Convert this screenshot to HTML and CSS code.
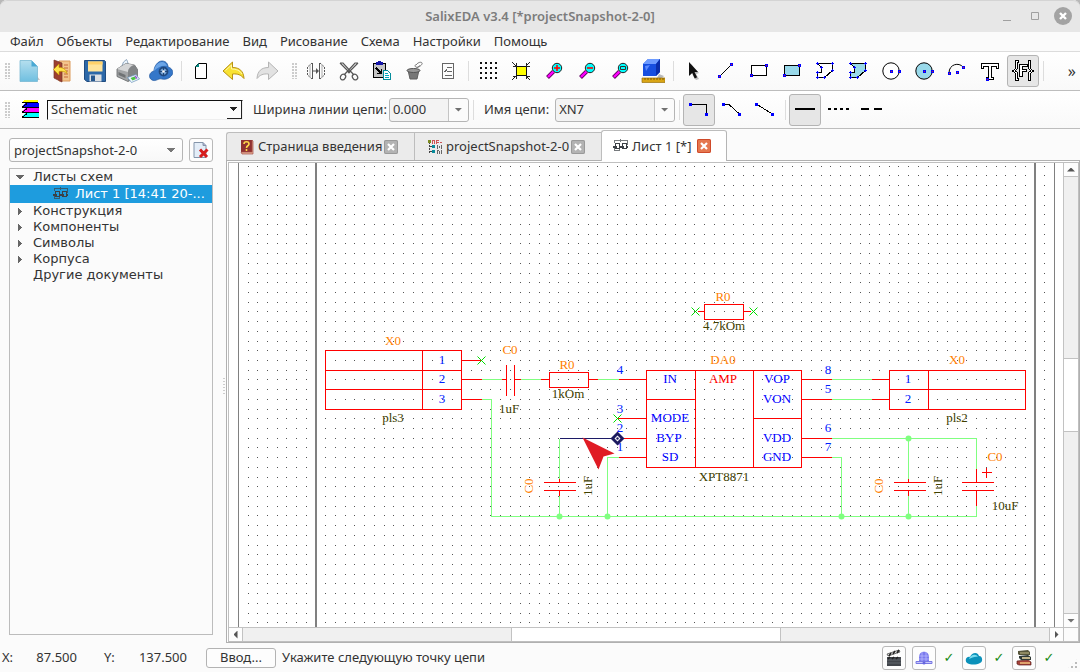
FILE: index.html
```html
<!DOCTYPE html>
<html lang="ru">
<head>
<meta charset="utf-8">
<title>SalixEDA v3.4</title>
<link rel="stylesheet" href="styles.css">
</head>
<body>
<div class="window">
  <header class="titlebar">
    <span></span>
    <h1 class="title">SalixEDA v3.4 [*projectSnapshot-2-0]</h1>
    <div class="window-buttons">
      <button class="win-btn" aria-label="Свернуть"><svg width="10" height="10"><path d="M1 9.500h8" stroke="#a0a0a0"/></svg></button>
      <button class="win-btn" aria-label="Развернуть"><svg width="10" height="10"><path d="M1.500 1.500h7v7h-7z" fill="none" stroke="#a0a0a0"/></svg></button>
      <button class="win-btn" aria-label="Закрыть"><svg width="18" height="18"><circle cx="9" cy="9" r="9" fill="#a3a3a3"/><path d="M6 6l6 6M12 6l-6 6" stroke="#fff" stroke-width="2.400"/></svg></button>
    </div>
  </header>

  <nav class="menubar">
    <button>Файл</button><button>Объекты</button><button>Редактирование</button><button>Вид</button><button>Рисование</button><button>Схема</button><button>Настройки</button><button>Помощь</button>
  </nav>

  <div class="toolbar">
    <span class="handle"></span>
    <div class="group">
      <button class="tool" aria-label="Новый"><svg viewBox="0 0 24 24"><defs><linearGradient id="doc" x1="0" y1="0" x2="0" y2="1"><stop offset="0" stop-color="#b5dfee"/><stop offset="1" stop-color="#6fbfe0"/></linearGradient></defs><path d="M5 21h18l-3-4z" fill="#c4c4c4"/><path d="M3 1.500h11.500l6 6V22.500H3z" fill="url(#doc)" stroke="#79b9d3" stroke-width=".8"/><path d="M14.500 1.500v6h6z" fill="#4aa9d4"/></svg></button>
      <button class="tool" aria-label="Открыть"><svg viewBox="0 0 24 24"><path d="M9 2h11v20H9z" fill="#f3c48b" stroke="#dc9a5b"/><path d="M14 6h4M14 9h4M14 12h4M14 15h4M14 18h4" stroke="#c4693c"/><path d="M4 1l8 3v19l-8-4z" fill="#9d3f2f" stroke="#76332b" stroke-width=".7"/><path d="M3.500 10.500L9 5v3.500c4 0 7 1.500 8 6-2-2-4-2.500-8-2V16z" fill="#ffe24b" stroke="#c99700" stroke-width=".7"/></svg></button>
      <button class="tool" aria-label="Сохранить"><svg viewBox="0 0 24 24"><path d="M1.500 1.500h20l1 1v20H4l-2.500-2z" fill="#2c68a8" stroke="#204c80"/><path d="M5 2.500h14.500v10H5z" fill="#ffe49c"/><path d="M5 2.500h14.500v3H5z" fill="#ffd16a"/><path d="M6.500 15.500h12v7h-12z" fill="#dde0e3"/><path d="M8 16.500h4v5.500H8z" fill="#26588f"/></svg></button>
      <button class="tool" aria-label="Печать"><svg viewBox="0 0 24 24"><path d="M5 9L7.500 3l3-2.500 1 2L13 9z" fill="#e9f3fc" stroke="#7893ad" stroke-width=".8"/><path d="M1 10l9-5.500L18.500 6l3 4.500v7L12 22.500 1 17.500z" fill="#a2a4a6" stroke="#616365" stroke-width=".8"/><path d="M1 10l9-5.500L18.500 6c-4 .5-6 3-6.500 7z" fill="#d5d6d7"/><path d="M12 13c.5-4 3.500-6 6.500-7l3 4.500v7L12 22.500z" fill="#818486"/><path d="M2.500 13l7 3v3l-7-3z" fill="#6f7274"/><path d="M11.500 18.500l8.500-3 3.500 4.500-8 3.500z" fill="#eef5ff" stroke="#6692b7" stroke-width=".7"/><path d="M14.500 19l4-1.500 1.500 2.500-3.500 1.500z" fill="#4cc445"/><path d="M19 17l2 2.500" stroke="#9355cf" stroke-width="1.500"/></svg></button>
      <button class="tool" aria-label="Облако"><svg viewBox="0 0 24 24"><path d="M3 21c-4-2-3-8 2-9 0-5 4-10 8-10s6 3 6 6c4 1 6 5 4 8s-6 5-10 4-6 3-10 1z" fill="#3577c9" stroke="#1c549d" stroke-width=".7"/><path d="M5 12c0-4 4-9 8-9 2 0 4 1 5 4-5-1-9 1-13 5z" fill="#6ba5e7"/><circle cx="14.500" cy="12.500" r="4" fill="#75a2d3" stroke="#224b82" stroke-width="1.800"/><path d="M14.500 8v9M10 12.500h9" stroke="#1e467b"/><circle cx="14.500" cy="12.500" r="1.300" fill="#fff"/></svg></button>
    </div>
    <span class="sep"></span>
    <div class="group">
      <button class="tool" aria-label="Лист"><svg viewBox="0 0 24 24"><path d="M9.500 4.500h8v15h-11v-12z" fill="#fff" stroke="#000"/><path d="M6 8l4-4v4z" fill="#078a83"/></svg></button>
      <button class="tool" aria-label="Отменить"><svg viewBox="0 0 24 24"><path d="M1 12L10.500 3v5.500c7 0 11 3.500 11.500 11-3-3.500-6-5-11.500-4.500v5.500z" fill="#f8e232" stroke="#b89113"/><path d="M3.500 11.500l6-5.500v4c5 0 8.500 1.500 10.500 5" fill="none" stroke="#fff6a8"/></svg></button>
      <button class="tool" aria-label="Повторить"><svg viewBox="0 0 24 24"><path d="M23 12L13.500 3v5.500c-7 0-11 3.500-11.500 11 3-3.500 6-5 11.500-4.500v5.500z" fill="#e2e2e2" stroke="#b5b5b5"/></svg></button>
    </div>
    <span class="handle wide"></span>
    <div class="group">
      <button class="tool" aria-label="Зазор"><svg viewBox="0 0 24 24" fill="none" stroke="#555"><path d="M8.500 4v16M15.500 4v16" /><path d="M8 4L3.500 8v8L8 20M16 4l4.500 4v8L16 20" stroke-dasharray="2 1"/><path d="M6 6v12M18 6v12" stroke="#aaa"/><path d="M9 12h4"/><path d="M12 9l3 3-3 3z" fill="#555" stroke="none"/></svg></button>
      <button class="tool" aria-label="Вырезать"><svg viewBox="0 0 24 24" fill="none" stroke="#555" stroke-width="1.200"><path d="M3 4l3 0 11 12M21 4l-3 0L7 16M3 4l10 10M21 4L11 14"/><ellipse cx="6" cy="18" rx="2.500" ry="3" transform="rotate(35 6 18)"/><ellipse cx="18" cy="18" rx="2.500" ry="3" transform="rotate(-35 18 18)"/></svg></button>
      <button class="tool" aria-label="Вставить"><svg class="crisp" viewBox="0 0 24 24"><path d="M3.500 4.500h12v14h-12z" fill="#c5c5c5" stroke="#000"/><path d="M6 3h2V2h3v1h2v3H6z" fill="#1515a8"/><path d="M6 9l5 5M11.500 10v4.500H7" stroke="#000" stroke-width="1.500" fill="none"/><path d="M13.500 11.500h4l3 3v6h-7z" fill="#fff" stroke="#058d9c"/><path d="M15 14.500h3M15 16.500h4M15 18.500h4" stroke="#00a9c0"/></svg></button>
      <button class="tool" aria-label="Очистить"><svg viewBox="0 0 24 24"><path d="M5 11h11l-2 9H7z" fill="#777" stroke="#5f5f5f"/><ellipse cx="10.500" cy="11.500" rx="6.500" ry="2" fill="#999" stroke="#555"/><path d="M13 9.500l4-3M13 6c3-4 7-3 6-1s-4 4-6 3-1-2 0-2z" fill="none" stroke="#777"/></svg></button>
      <button class="tool" aria-label="Свойства"><svg class="crisp" viewBox="0 0 24 24" fill="none" stroke="#666"><path d="M6.500 4.500h11v15h-11z"/><path d="M11 8.500h5M11 12.500h5M9 16.500h7M8 12l1 1 2-3"/></svg></button>
    </div>
    <span class="sep"></span>
    <div class="group">
      <button class="tool" aria-label="Сетка"><svg class="crisp" viewBox="0 0 24 24" stroke="#111" stroke-width="2" stroke-dasharray="2 3"><path d="M4 4h17M4 9h17M4 14h17M4 19h17"/></svg></button>
      <button class="tool" aria-label="Показать всё"><svg class="crisp" viewBox="0 0 24 24" stroke="#222"><path d="M7.500 7.500h10v9h-10z" fill="#ff0" stroke="#111"/><path d="M3 3l4 4M21 3l-4 4M3 21l4-4M21 21l-4-4M7.500 4v3H4M17.500 4v3H21M7.500 20v-3H4M17.500 20v-3H21" fill="none"/></svg></button>
      <button class="tool" aria-label="Увеличить"><svg viewBox="-1 0 24 24"><path d="M4.500 18.500l6-6" stroke="#600060" stroke-width="4"/><path d="M5 18l5.500-5.500" stroke="#f0f" stroke-width="2.400"/><circle cx="14" cy="9" r="4.700" fill="#0ff" stroke="#222"/><path d="M11 9h6M14 6v6" stroke="#f00" stroke-width="1.600"/></svg></button>
      <button class="tool" aria-label="Уменьшить"><svg viewBox="-1 0 24 24"><path d="M4.500 18.500l6-6" stroke="#600060" stroke-width="4"/><path d="M5 18l5.500-5.500" stroke="#f0f" stroke-width="2.400"/><circle cx="14" cy="9" r="4.700" fill="#0ff" stroke="#222"/><path d="M11 9h6" stroke="#f00" stroke-width="1.600"/></svg></button>
      <button class="tool" aria-label="Окно"><svg viewBox="-1 0 24 24"><path d="M4.500 18.500l6-6" stroke="#600060" stroke-width="4"/><path d="M5 18l5.500-5.500" stroke="#f0f" stroke-width="2.400"/><circle cx="14" cy="9" r="4.700" fill="#0ff" stroke="#222"/><path d="M11.500 7.500h5v3h-5z" fill="none" stroke="#333"/></svg></button>
      <button class="tool" aria-label="3D вид"><svg viewBox="0 0 24 24"><path d="M18 15l5 2-2 2h-5z" fill="#bbb"/><path d="M2 5l5-5h12v13l-4 4H2z" fill="#174fe0"/><path d="M2 5l5-5h12l-4 5z" fill="#6d9bff"/><path d="M15 5l4-5v13l-4 4z" fill="#0a2eab"/><path d="M4 7l5-1-4 6z" fill="#5c8bff"/><path d="M1 19h23v4.500H1z" fill="#d9a514" stroke="#9b710c" stroke-width=".7"/><path d="M4 19v2M7 19v2M10 19v2M13 19v2M16 19v2M19 19v2M22 19v2" stroke="#6b4c00" stroke-width=".8"/></svg></button>
    </div>
    <span class="sep"></span>
    <div class="group">
      <button class="tool" aria-label="Выбор"><svg viewBox="0 0 24 24"><path d="M10 5l8 9-3 1 3 5-3 1-3-4z" fill="#bbb"/><path d="M8 3v14l3.200-3 2.500 5.500 2.400-1.200-2.600-5.300H17z" fill="#111"/></svg></button>
      <button class="tool" aria-label="Линия"><svg class="crisp" viewBox="0 0 24 24"><path d="M6 17L18 5" stroke="#000"/><path d="M4.500 16.500h2v2h-2zM16.500 4.500h2v2h-2z" fill="#d22" stroke="#00f"/></svg></button>
      <button class="tool" aria-label="Прямоугольник"><svg class="crisp" viewBox="0 0 24 24"><path d="M4.500 6.500h15v10h-15z" fill="#fff" stroke="#000"/><path d="M3.500 15.500h2v2h-2zM18.500 5.500h2v2h-2z" fill="#d22" stroke="#00f"/></svg></button>
      <button class="tool" aria-label="Заполненный прямоугольник"><svg class="crisp" viewBox="0 0 24 24"><path d="M4.500 6.500h15v10h-15z" fill="#99d9ea" stroke="#000"/><path d="M3.500 15.500h2v2h-2zM18.500 5.500h2v2h-2z" fill="#d22" stroke="#00f"/></svg></button>
      <button class="tool" aria-label="Многоугольник"><svg class="crisp" viewBox="0 0 24 24"><path d="M4.500 4.500h15v7l-8 7h-7v-5h4v-5z" fill="#fff" stroke="#000"/><path d="M3 4.500h3M4.500 3v3M18 4.500h3M19.500 3v3M18 11.500h3M19.500 10v3M10 18.500h3M11.500 17v3M3 18.500h3M4.500 17v3M3 13.500h3M4.500 12v3M7 8.500h3M8.500 7v3" stroke="#00f"/></svg></button>
      <button class="tool" aria-label="Заполненный многоугольник"><svg class="crisp" viewBox="0 0 24 24"><path d="M4.500 4.500h15v7l-8 7h-7v-5h4v-5z" fill="#99d9ea" stroke="#000"/><path d="M3 4.500h3M4.500 3v3M18 4.500h3M19.500 3v3M18 11.500h3M19.500 10v3M10 18.500h3M11.500 17v3M3 18.500h3M4.500 17v3M3 13.500h3M4.500 12v3M7 8.500h3M8.500 7v3" stroke="#00f"/></svg></button>
      <button class="tool" aria-label="Окружность"><svg viewBox="0 0 24 24"><circle cx="12" cy="12" r="8.200" fill="#fff" stroke="#000"/><path class="crisp" d="M11 11h2v2h-2zM19 11h2v2h-2z" fill="#d22" stroke="#00f"/></svg></button>
      <button class="tool" aria-label="Круг"><svg viewBox="0 0 24 24"><circle cx="12" cy="12" r="8.200" fill="#99d9ea" stroke="#000"/><path class="crisp" d="M11 11h2v2h-2zM19 11h2v2h-2z" fill="#d22" stroke="#00f"/></svg></button>
      <button class="tool" aria-label="Дуга"><svg viewBox="0 0 24 24"><path d="M4 14C4 5 14 3 18 8" fill="none" stroke="#000"/><path class="crisp" d="M3 13h2v2H3zM11 12h2v2h-2zM17 7h2v2h-2z" fill="#d22" stroke="#00f"/></svg></button>
      <button class="tool" aria-label="Текст"><svg class="crisp" viewBox="0 0 24 24"><path d="M3.500 4.500h17v5h-2v-2h-5v11h2v2h-7v-2h2v-11h-5v2h-2z" fill="#fff" stroke="#000"/><path d="M8 19h2v2H8z" fill="#d22" stroke="#00f"/></svg></button>
      <button class="tool on" aria-label="Поле"><svg class="crisp" viewBox="0 0 24 24"><path d="M7 1.500H4.500v8l-3 2.500 3 2.500v7H7v-2h-.5v-6L4 12l2.500-2.500v-6H7zM17 1.500h2.500v8l3 2.500-3 2.500v7H17v-2h.5v-6L20 12l-2.500-2.500v-6H17z" fill="#fff" stroke="#000"/><path d="M8.500 5.500h8v2h-5v3h4v2h-4v5h-3z" fill="#fff" stroke="#000"/></svg></button>
    </div>
    <span class="sep"></span>
    <button class="more" aria-label="Ещё">»</button>
  </div>

  <div class="toolbar second">
    <span class="handle"></span>
    <svg class="layers crisp" width="18" height="20" aria-hidden="true"><path d="M3 0h14v3H0z" fill="#ff0"/><path d="M4 3h14v4H1z" fill="#00f"/><path d="M4 8h14v4H1z" fill="#f0f"/><path d="M4 13h14v4H1z" fill="#0ff"/><path d="M1 2.500h16M1 7.500l5-4M1 7.500h17M1 12.500l5-4M1 12.500h17M1 17.500l5-4M1 17.500h17" stroke="#000"/></svg>
    <select class="layer-select" aria-label="Слой"><option>Schematic net</option></select>
    <label class="lbl first" for="width">Ширина линии цепи:</label>
    <div class="combo narrow"><input id="width" value="0.000"><button aria-label="Список ширин"><i class="down"></i></button></div>
    <span class="sep"></span>
    <label class="lbl" for="net">Имя цепи:</label>
    <div class="combo"><input id="net" value="XN7"><button aria-label="Список цепей"><i class="down"></i></button></div>
    <span class="sep"></span>
    <div class="group">
      <button class="tool on" aria-label="Ортогонально"><svg class="crisp" viewBox="0 0 24 24"><path d="M4 6.500h15.500V17" fill="none" stroke="#000"/><path d="M2 5h3v3H2zM18 15h3v3h-3z" fill="#00f"/></svg></button>
      <button class="tool" aria-label="45 градусов"><svg class="crisp" viewBox="0 0 24 24"><path d="M4 6.500h5L19.500 16" fill="none" stroke="#000"/><path d="M2 5h3v3H2zM18 15h3v3h-3z" fill="#00f"/></svg></button>
      <button class="tool" aria-label="Произвольно"><svg class="crisp" viewBox="0 0 24 24"><path d="M4 6.500L19.500 16" fill="none" stroke="#000"/><path d="M2 5h3v3H2zM18 15h3v3h-3z" fill="#00f"/></svg></button>
    </div>
    <span class="sep"></span>
    <div class="group">
      <button class="tool on" aria-label="Сплошная"><svg class="crisp" viewBox="0 0 24 24"><path d="M2 11h20" stroke="#000" stroke-width="2"/></svg></button>
      <button class="tool" aria-label="Точечная"><svg class="crisp" viewBox="0 0 24 24"><path d="M2 11h21" stroke="#000" stroke-width="2" stroke-dasharray="3 3"/></svg></button>
      <button class="tool" aria-label="Штриховая"><svg class="crisp" viewBox="0 0 24 24"><path d="M2 11h21" stroke="#000" stroke-width="2" stroke-dasharray="8 5"/></svg></button>
    </div>
  </div>

  <main class="main">
    <aside class="side">
      <div class="side-top">
        <select class="project-select" aria-label="Проект"><option>projectSnapshot-2-0</option></select>
        <button class="small-btn" aria-label="Закрыть проект"><svg width="18" height="18"><path d="M2 1.500h9l3 3v12H2z" fill="#e3edf8" stroke="#8495aa"/><path d="M11 1.500v3h3" fill="#aac" stroke="#8495aa"/><path d="M8 8.500l7 7.500M15.500 8.500L8 16" stroke="#d51c1c" stroke-width="3"/></svg></button>
      </div>
      <ul class="tree">
        <li><i class="open"></i>Листы схем</li>
        <li class="selected"><svg width="16" height="16" viewBox="0 0 16 16"><use href="#sheet"/></svg><span>Лист 1 [14:41 20-...</span></li>
        <li><i class="closed"></i>Конструкция</li>
        <li><i class="closed"></i>Компоненты</li>
        <li><i class="closed"></i>Символы</li>
        <li><i class="closed"></i>Корпуса</li>
        <li><i></i>Другие документы</li>
      </ul>
    </aside>
    <div class="splitter"><span></span></div>

    <section class="editor">
      <div class="tabs" role="tablist">
        <div class="tab">
          <svg width="16" height="16" viewBox="0 0 16 16"><path d="M2 1h11v12H2z" fill="#903131"/><path d="M2 13l1 2h11V2l-1-1v12z" fill="#e6b096" stroke="#a14b45" stroke-width=".7"/><path d="M5 5c0-3 5-3 5 0 0 2-2.500 1.500-2.500 4M7.500 10v2" fill="none" stroke="#ffd84a" stroke-width="1.600"/></svg>
          <button role="tab">Страница введения</button>
          <button class="close" aria-label="Закрыть вкладку"><svg width="14" height="14"><path d="M4 4l6 6M10 4l-6 6" stroke="#fff" stroke-width="2.200"/></svg></button>
        </div>
        <div class="tab">
          <svg class="crisp" width="16" height="16" viewBox="0 0 16 16"><path d="M2.500 3v11M3 7.500h4M3 12.500h4" stroke="#444" fill="none" stroke-dasharray="2 1"/><path d="M1 1h3v3H1z" fill="#7b8a20"/><path d="M5 6h3v3H5zM5 11h3v3H5z" fill="#078b9b"/><path d="M5.500 1.500h2M5.500 1v4M7.500 1v4M9.500 1v4M10 1.500h2M10 3.500h2M13 3.500h2" stroke="#c55"/><path d="M10.500 6v4M12.500 7v2M14.500 6v4M10.500 11v4M12.500 12v3M14.500 11v4M10 11.500h2" stroke="#666"/></svg>
          <button role="tab">projectSnapshot-2-0</button>
          <button class="close" aria-label="Закрыть вкладку"><svg width="14" height="14"><path d="M4 4l6 6M10 4l-6 6" stroke="#fff" stroke-width="2.200"/></svg></button>
        </div>
        <div class="tab active">
          <svg width="16" height="16" viewBox="0 0 16 16"><g id="sheet" fill="none" stroke="#3c4146" shape-rendering="crispEdges"><path d="M2.500 5.500h4v5h-4zM9.500 5.500h4v5h-4z"/><path d="M0 8.500h4M6 8.500h5M13 8.500h2" stroke-width="2"/><path d="M1.500 5V2.500h13V7M7.500 1v3M1.500 10v2.500h5V10" opacity=".7"/></g></svg>
          <button role="tab" aria-selected="true">Лист 1 [*]</button>
          <button class="close" aria-label="Закрыть вкладку"><svg width="14" height="14"><path d="M4 4l6 6M10 4l-6 6" stroke="#fff" stroke-width="2.200"/></svg></button>
        </div>
      </div>

      <div class="pane"><div class="view">
        <svg class="canvas" role="img" aria-label="Схема">
          <path class="grid crisp" id="grid"/>
          <g transform="translate(-229 -163)">
            <path d="M238 163h1v2000h-1zM315 163h2v2000h-2zM1034 163h2v2000h-2zM1054 163h1v2000h-1z" fill="#808080"/>
          </g>
          <g transform="translate(-228.500 -162.500)">
            <g class="net crisp">
              <path d="M481 379H501M520 379H540M597 379H618M481 399H491V516H976V505M559 438V478M559 495V516M618 457H607V516M831 379H871M831 399H871M831 438H976V468M908 438V478M908 495V516M831 457H841V516"/>
            </g>
            <g class="part crisp">
              <path d="M325 350H461V409H325zM325 370H461M325 389H461M422 350V409M461 360H481M461 379H481M461 399H481"/>
              <path d="M501 379H506M506 364V395M514 364V395M514 379H520M540 379H549M549 372H588V387H549zM588 379H597M618 379H646"/>
              <path d="M646 370H801V467H646zM695 370V467M753 370V467M646 399H695M753 418H801M617 418H646M617 438H646M618 457H646"/>
              <path d="M801 379H831M801 399H831M801 438H831M801 457H831M871 379H889M871 399H889"/>
              <path d="M889 370H1025V409H889zM889 389H1025M928 370V409M704 304H743V319H704zM697 311H704M743 311H750"/>
              <path d="M559 478V482M543 482H575M543 490H575M559 490V495M908 478V482M893 482H925M893 490H925M908 490V495M976 468V482M961 482H993M961 490H993M976 490V505M981 472H991M986 467V477"/>
            </g>
            <path class="free" d="M477 356l8 8M485 356l-8 8M613 414l8 8M621 414l-8 8M691 307l8 8M699 307l-8 8M749 307l8 8M757 307l-8 8"/>
            <g fill="#80ff80"><circle cx="559" cy="516" r="3"/><circle cx="607" cy="516" r="3"/><circle cx="841" cy="516" r="3"/><circle cx="908" cy="516" r="3"/><circle cx="908" cy="438" r="3"/></g>
          </g>
          <g transform="translate(-229 -163)">
            <g class="ref">
              <text x="393" y="345">X0</text><text x="510" y="354">C0</text><text x="567" y="369">R0</text><text x="723" y="301">R0</text><text x="723" y="364">DA0</text><text x="957" y="364">X0</text><text x="995" y="461">C0</text>
              <text transform="translate(533 486) rotate(-90)">C0</text><text transform="translate(883 486) rotate(-90)">C0</text>
            </g>
            <g class="val">
              <text x="393" y="422">pls3</text><text x="509" y="413">1uF</text><text x="568" y="398">1kOm</text><text x="724" y="330">4.7kOm</text><text x="724" y="481">XPT8871</text><text x="957" y="422">pls2</text><text x="1005" y="510">10uF</text>
              <text transform="translate(592 486) rotate(-90)">1uF</text><text transform="translate(942 486) rotate(-90)">1uF</text>
            </g>
            <g class="num">
              <text x="442" y="364">1</text><text x="442" y="383">2</text><text x="442" y="403">3</text><text x="620" y="374">4</text><text x="620" y="413">3</text><text x="620" y="432">2</text><text x="620" y="451">1</text><text x="828" y="374">8</text><text x="828" y="393">5</text><text x="828" y="432">6</text><text x="828" y="451">7</text><text x="908" y="383">1</text><text x="908" y="403">2</text>
            </g>
            <g class="pin">
              <text x="670" y="383">IN</text><text x="670" y="422">MODE</text><text x="669" y="442">BYP</text><text x="670" y="461">SD</text><text x="777" y="383">VOP</text><text x="777" y="403">VON</text><text x="777" y="442">VDD</text><text x="777" y="461">GND</text><text class="func" x="723" y="383">AMP</text>
            </g>
          </g>
          <g transform="translate(-228.500 -162.500)">
            <path class="crisp" d="M559 438H612" stroke="#1c1a66" fill="none"/>
            <path d="M617 431l7 7-7 7-7-7z" fill="#1c1a5e"/><path d="M617 435l3 3-3 3-3-3z" fill="#fff"/><circle cx="617" cy="438" r="1.200" fill="#1c1a5e"/>
            <path d="M582 437L614 453L603 456L598 469z" fill="#e01b24"/>
          </g>
        </svg>
        <div class="vscroll"><button aria-label="Вверх"><i class="up"></i></button><div class="track"><span></span><b></b><span></span></div><button aria-label="Вниз"><i class="down"></i></button></div>
        <div class="hscroll"><button aria-label="Влево"><i class="left"></i></button><div class="track"><span></span><b></b><span></span></div><button aria-label="Вправо"><i class="right"></i></button></div>
        <div class="corner"></div>
      </div></div>
    </section>
  </main>

  <footer class="status">
    <span class="axis">X:</span><output class="coord">87.500</output>
    <span class="axis second">Y:</span><output class="coord wide">137.500</output>
    <button class="enter">Ввод...</button>
    <span class="hint">Укажите следующую точку цепи</span>
    <div class="indicators">
      <button class="small-btn" aria-label="Видео"><svg width="18" height="18"><path d="M2 8h14v9H2z" fill="#41454b"/><path d="M2 11h14M2 14h14" stroke="#6f747b" stroke-width=".7"/><path d="M2 5l12-4 1 2L3 7z" fill="#ddd" stroke="#222" stroke-width=".6"/><path d="M4 7l2-3M8 5l2-3M12 4l2-3M3 10l2-2M7 10l2-2M11 10l2-2" stroke="#222" stroke-width="1.500"/></svg></button>
      <button class="small-btn" aria-label="Сервер"><svg width="18" height="18"><path d="M4 12V8c0-7 10-7 10 0v4z" fill="#7b7bed"/><path d="M1 12.500h16v2H1z" fill="#c7c7fb" stroke="#7878e4"/><path d="M4 7h10M4 10h10M7 3v9M11 3v9" stroke="#b9b9ff" stroke-width=".8"/><circle cx="9" cy="14" r="1.500" fill="#6565de"/></svg></button>
      <span class="tick">✓</span>
      <button class="small-btn" aria-label="Облако"><svg width="18" height="18"><path d="M2 14c-3-3 0-7 3-6 2-5 8-5 9-1 4 0 4 6 1 7-4 2-9 2-13 0z" fill="#0b91ba"/><path d="M4 10c1-4 7-6 9-2-3-1-6 1-9 2z" fill="#78dcef"/></svg></button>
      <span class="tick">✓</span>
      <button class="small-btn" aria-label="Библиотека"><svg width="18" height="18"><path d="M2 12l11-1 3 2v3H4l-2-1z" fill="#a6423a" stroke="#5b211d" stroke-width=".7"/><path d="M5 14h10" stroke="#f0c47f" stroke-width="1.500"/><path d="M4 7l9-1 3 2v3H6L4 9z" fill="#303a37"/><path d="M7 9h8" stroke="#f4dfa6" stroke-width="1.500"/><path d="M3 2l10-1 2 2v3H4L3 5z" fill="#57553a"/><path d="M5 4h9" stroke="#c7be89"/></svg></button>
      <span class="tick">✓</span>
      <i class="grip"></i>
    </div>
  </footer>
</div>
<script src="grid.js"></script>
</body>
</html>
```

FILE: styles.css
```css
* { box-sizing: border-box; }
body {
  margin: 0;
  background: #b8b8b8;
  color: #333;
  font: 13px/17px "Noto Sans", "Open Sans", sans-serif;
}
button, input, select {
  margin: 0;
  padding: 0;
  border: 0;
  border-radius: 0;
  background: none;
  color: inherit;
  font: inherit;
}
svg { display: block; flex: none; }
.crisp { shape-rendering: crispEdges; }

.window {
  display: flex;
  flex-direction: column;
  height: 100vh;
  min-height: 400px;
  background: #fbfbfb;
  border-radius: 7px 7px 0 0;
  overflow: hidden;
}

.titlebar {
  display: grid;
  grid-template-columns: 1fr auto 1fr;
  align-items: center;
  flex: none;
  height: 32px;
  background: #e7e7e7;
  border-radius: 7px 7px 0 0;
  box-shadow: inset 0 1px #d4d4d4;
}
.title { margin: 0; font-size: 13px; font-weight: 600; color: #7c7c7c; }
.window-buttons { display: flex; align-items: center; justify-content: flex-end; gap: 18px; padding-right: 8px; }
.win-btn { display: flex; }
.win-btn:last-child { margin-left: -4px; }

.menubar {
  display: flex;
  flex: none;
  gap: 13px;
  height: 20px;
  padding: 0 10px;
  border-bottom: 1px solid #dcdcdc;
}
.menubar button { white-space: nowrap; }

.toolbar {
  display: flex;
  align-items: center;
  flex: none;
  height: 39px;
  padding-left: 5px;
  border-bottom: 1px solid #bdbdbd;
  background: linear-gradient(#fff, #f9f9f9);
}
.toolbar.second { height: 38px; }
.handle {
  flex: none;
  width: 5px;
  height: 16px;
  margin-right: 3px;
  background: radial-gradient(circle at 1px 1px, #ccc 1px, transparent 1px) 0 0 / 3px 3px;
}
.handle.wide { margin-left: 9px; }
.group { display: flex; gap: 1px; }
.tool {
  display: flex;
  align-items: center;
  justify-content: center;
  flex: none;
  width: 32px;
  height: 32px;
  border-radius: 3px;
}
.tool svg { width: 24px; height: 24px; }
.tool.on { background: #e6e6e6; border: 1px solid #b4b4b4; }
.sep { flex: none; width: 1px; height: 20px; margin: 0 3px 0 4px; background: #ddd; }
.more { margin-left: auto; padding-right: 4px; font-size: 16px; }

.layers { margin: 0 8px 0 8px; }
.layer-select {
  flex: none;
  appearance: none;
  width: 196px;
  height: 20px;
  padding-left: 3px;
  border: 1px solid #eee;
  border-top: 1px solid #111;
  border-left: 1px solid #111;
  background-color: #fcfcfc;
  background-image:
    linear-gradient(#222, #222),
    linear-gradient(#222, #222),
    conic-gradient(from -45deg at 50% 100%, #222 90deg, transparent 0);
  background-size: 15px 1px, 1px 17px, 8px 4px;
  background-position: right 0 bottom 0, right 0 top 0, right 5px top 6px;
  background-repeat: no-repeat;
}
.lbl { margin: 0 6px 0 7px; white-space: nowrap; }
.lbl.first { margin: 0 2px 0 10px; }
.combo {
  display: flex;
  flex: none;
  width: 120px;
  height: 24px;
  border: 1px solid #b5b5b5;
  border-radius: 3px;
  background: #f3f3f3;
}
.combo.narrow { width: 80px; }
.combo input { flex: 1; min-width: 0; padding-left: 3px; }
.combo button {
  display: grid;
  place-items: center;
  width: 20px;
  border-left: 1px solid #c4c4c4;
  background: #fbfbfb;
  border-radius: 0 3px 3px 0;
}
i.down { width: 8px; height: 4px; background: #707070; clip-path: polygon(0 0, 100% 0, 50% 100%); }
i.up { width: 8px; height: 4px; background: #555; clip-path: polygon(0 100%, 100% 100%, 50% 0); }
i.left { width: 4px; height: 8px; background: #555; clip-path: polygon(100% 0, 100% 100%, 0 50%); }
i.right { width: 4px; height: 8px; background: #555; clip-path: polygon(0 0, 0 100%, 100% 50%); }

.main { display: flex; flex: 1; min-height: 0; }
.side { display: flex; flex-direction: column; flex: none; width: 213px; padding: 9px 0 8px 9px; }
.side-top { display: flex; gap: 6px; margin-bottom: 6px; }
.project-select {
  flex: 1;
  min-width: 0;
  appearance: none;
  height: 24px;
  padding-left: 4px;
  border: 1px solid #b5b5b5;
  border-radius: 3px;
  background: conic-gradient(from -45deg at 50% 100%, #777 90deg, transparent 0) no-repeat right 7px center / 8px 4px, linear-gradient(#fff, #f8f8f8);
}
.small-btn {
  display: grid;
  place-items: center;
  flex: none;
  width: 24px;
  height: 24px;
  border: 1px solid #b9b9b9;
  border-radius: 3px;
  background: #fdfdfd;
}
.tree {
  flex: 1;
  margin: 0;
  padding: 0;
  border: 1px solid #bcbcbc;
  list-style: none;
  font: 13px/16px "DejaVu Sans", sans-serif;
}
.tree li { display: flex; align-items: center; height: 16px; white-space: nowrap; }
.tree i { flex: none; width: 23px; height: 8px; }
.tree .open { background: conic-gradient(from -45deg at 50% 100%, #666 90deg, transparent 0) no-repeat 6px 2px / 8px 4px; }
.tree .closed { background: conic-gradient(from 225deg at 100% 50%, #666 90deg, transparent 0) no-repeat 8px 0 / 4px 8px; }
.tree .selected { height: 18px; padding: 0 6px 0 43px; gap: 6px; background: #1e9cde; color: #fff; }
.splitter { display: grid; place-items: center; flex: none; width: 13px; padding-left: 9px; }
.splitter span { width: 2px; height: 17px; background: repeating-linear-gradient(#ccc 0 1px, transparent 1px 3px); }

.editor { display: flex; flex-direction: column; flex: 1; min-width: 0; padding-top: 1px; }
.tabs { display: flex; align-items: flex-end; flex: none; height: 30px; }
.tab {
  display: flex;
  align-items: center;
  width: 188px;
  height: 28px;
  padding: 0 16px 0 12px;
  border: 1px solid #bdbdbd;
  border-bottom: 0;
  border-right: 0;
  background: #ebebeb;
}
.tab:first-child { border-radius: 3px 0 0 0; }
.tab:nth-child(2) { width: 187px; }
.tab > button:first-of-type { margin-left: 3px; white-space: nowrap; }
.tab .close {
  display: grid;
  place-items: center;
  width: 14px;
  height: 14px;
  margin-left: auto;
  border-radius: 2px;
  background: #b3b3b3;
  box-shadow: inset 0 0 0 1px #999;
}
.tab.active {
  position: relative;
  width: 126px;
  height: 31px;
  margin-bottom: -1px;
  padding: 0 15px 0 11px;
  border-right: 1px solid #b5b5b5;
  border-radius: 3px 3px 0 0;
  background: #fff;
}
.tab.active .close { background: #e5774f; box-shadow: inset 0 0 0 1px #cf4a2a; }
.pane {
  flex: 1;
  min-height: 0;
  padding: 1px 0 0 1px;
  border: 1px solid #b0b0b0;
  background: #fff;
}
.view {
  display: grid;
  grid-template: minmax(0, 1fr) 14px / minmax(0, 1fr) 15px;
  height: 100%;
  border: 1px solid #bfbfbf;
}
.canvas { width: 100%; height: 100%; overflow: hidden; }
.canvas text { font: 13px "Liberation Serif", serif; text-anchor: middle; }
.net { fill: none; stroke: #80ff80; }
.part { fill: none; stroke: #f00; }
.free { fill: none; stroke: #0d0; }
.ref { fill: #ff8000; }
.val { fill: #404000; }
.num { fill: #0020ff; }
.pin { fill: #00f; }
.pin .func { fill: #f00; }
.grid { fill: #555; }

.vscroll, .hscroll { display: flex; background: #f0f0f0; }
.vscroll { flex-direction: column; border-left: 1px solid #c2c2c2; }
.hscroll { border-top: 1px solid #c2c2c2; }
.vscroll button, .hscroll button { display: grid; place-items: center; flex: none; background: #fdfdfd; }
.vscroll button { height: 13px; }
.hscroll button { width: 13px; }
.track { display: flex; flex: 1; }
.vscroll .track { flex-direction: column; border: solid #c2c2c2; border-width: 1px 0; }
.hscroll .track { border: solid #c2c2c2; border-width: 0 1px; }
.track b { background: #fff; }
.vscroll span { flex: 5; }
.vscroll b { flex: 2; border: solid #c2c2c2; border-width: 1px 0; }
.hscroll span, .hscroll b { flex: 1; }
.hscroll b { border: solid #c2c2c2; border-width: 0 1px; }
.corner { border: solid #c2c2c2; border-width: 1px 0 0 1px; background: #fbfbfb; }

.status { display: flex; align-items: center; height: 29px; flex: none; padding-left: 2px; white-space: nowrap; }
.axis { width: 24px; }
.axis.second { margin-left: 27px; }
.coord { width: 51px; text-align: right; }
.coord.wide { width: 59px; }
.enter { width: 70px; height: 20px; margin-left: 19px; border: 1px solid #b3b3b3; border-radius: 3px; background: #fdfdfd; }
.hint { margin-left: 6px; }
.indicators { display: flex; align-items: center; gap: 6px; margin-left: auto; }
.tick { width: 14px; text-align: center; color: #138a13; font: 13px/16px "DejaVu Sans", sans-serif; }
.grip { width: 12px; height: 12px; margin: 12px 1px 0 5px; background: radial-gradient(circle at 1px 1px, #bbb 1px, transparent 1px) 0 0 / 4px 4px; clip-path: polygon(100% 0, 100% 100%, 0 100%); }
```

FILE: grid.js
```js
// Fills the drawing area with a dot grid snapped to whole pixels.
const pitch = 9.715;
const columns = 83;
const rows = 48;
let d = '';
for (let r = 0; r < rows; r++) {
  for (let c = 0; c < columns; c++) {
    const x = Math.floor(19 + c * pitch);
    const y = Math.floor(3.2 + r * pitch);
    d += `M${x} ${y}h1v1h-1z`;
  }
}
document.getElementById('grid').setAttribute('d', d);
```
